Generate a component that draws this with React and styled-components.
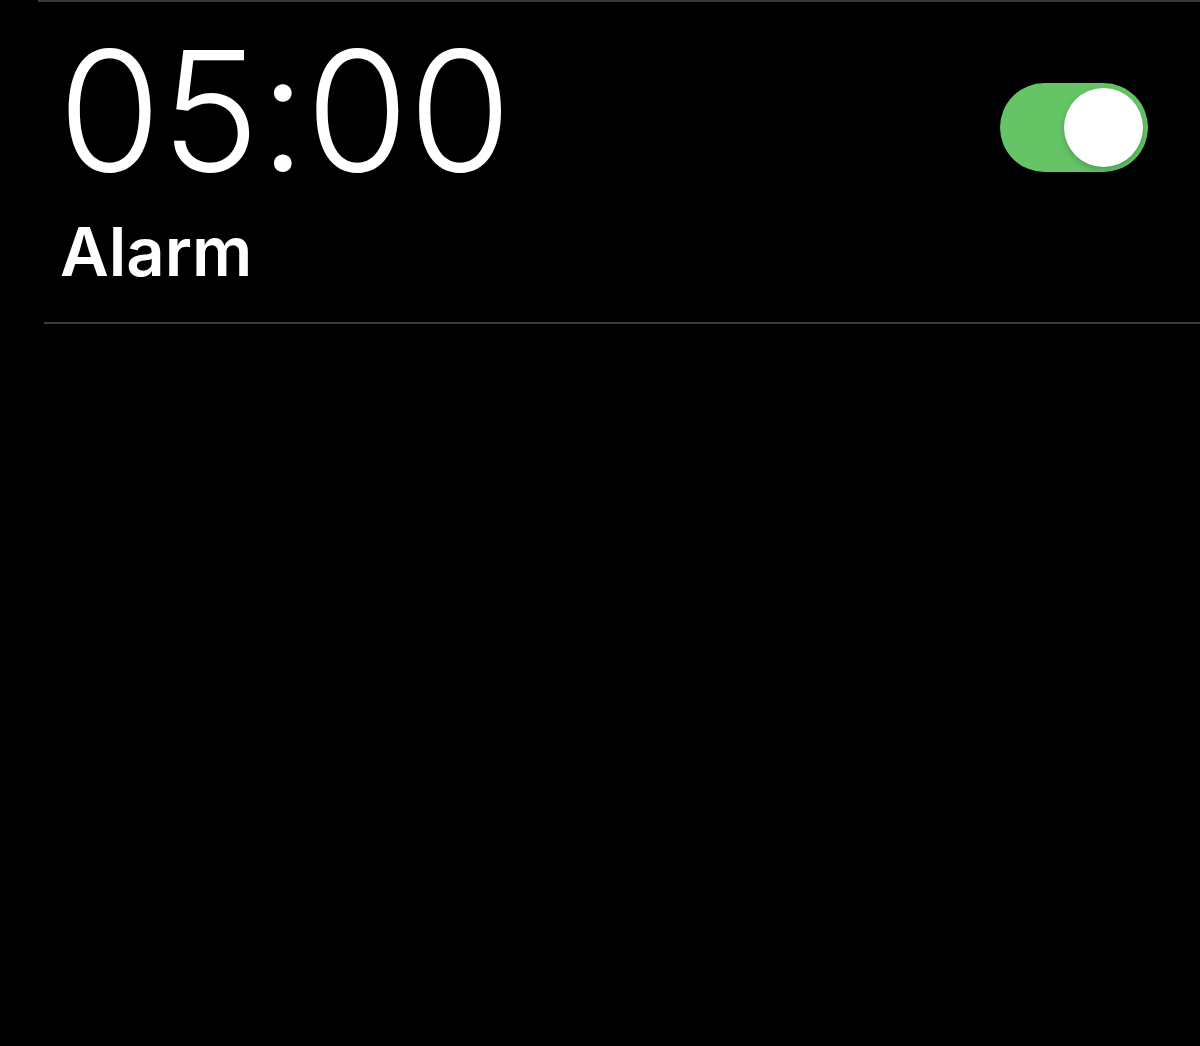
import React, { useState } from "react";
import styled, { createGlobalStyle } from "styled-components";

const GlobalStyle = createGlobalStyle`
  html, body {
    margin: 0;
    padding: 0;
    background: #000;
  }
  body {
    font-family: Inter, "Noto Sans", "Liberation Sans", sans-serif;
    color: #fff;
  }
`;

const Page = styled.div`
  min-height: 100vh;
  background: #000;
  overflow: hidden;
`;

const TopRule = styled.div`
  margin-left: 38px;
  height: 2px;
  background: #3a3a3c;
`;

const AlarmRow = styled.div`
  margin-left: 44px;
  border-bottom: 2px solid #3a3a3c;
  height: 322px;
  box-sizing: border-box;
  display: flex;
  justify-content: space-between;
  align-items: flex-start;
  padding: 0 52px 0 16px;
`;

const Texts = styled.div`
  display: flex;
  flex-direction: column;
`;

const Time = styled.div`
  font-size: 167px;
  font-weight: 300;
  line-height: 1;
  letter-spacing: -0.5px;
  margin-top: 25px;
  margin-left: -2px;
`;

const Label = styled.div`
  font-size: 67px;
  font-weight: 600;
  line-height: 1;
  margin-top: 24px;
`;

const Switch = styled.button`
  width: 148px;
  height: 89px;
  margin-top: 81px;
  border: none;
  border-radius: 45px;
  background: ${({ $on }) => ($on ? "#65c466" : "#39393d")};
  display: flex;
  align-items: center;
  justify-content: ${({ $on }) => ($on ? "flex-end" : "flex-start")};
  padding: 0 5px;
  box-sizing: border-box;
  cursor: pointer;
`;

const Knob = styled.span`
  width: 79px;
  height: 79px;
  border-radius: 50%;
  background: #fff;
  box-shadow: 0 3px 6px rgba(0, 0, 0, 0.2);
`;

export default function App() {
  const [on, setOn] = useState(true);
  return (
    <Page>
      <GlobalStyle />
      <TopRule />
      <AlarmRow>
        <Texts>
          <Time>05:00</Time>
          <Label>Alarm</Label>
        </Texts>
        <Switch $on={on} onClick={() => setOn(!on)}>
          <Knob />
        </Switch>
      </AlarmRow>
    </Page>
  );
}
